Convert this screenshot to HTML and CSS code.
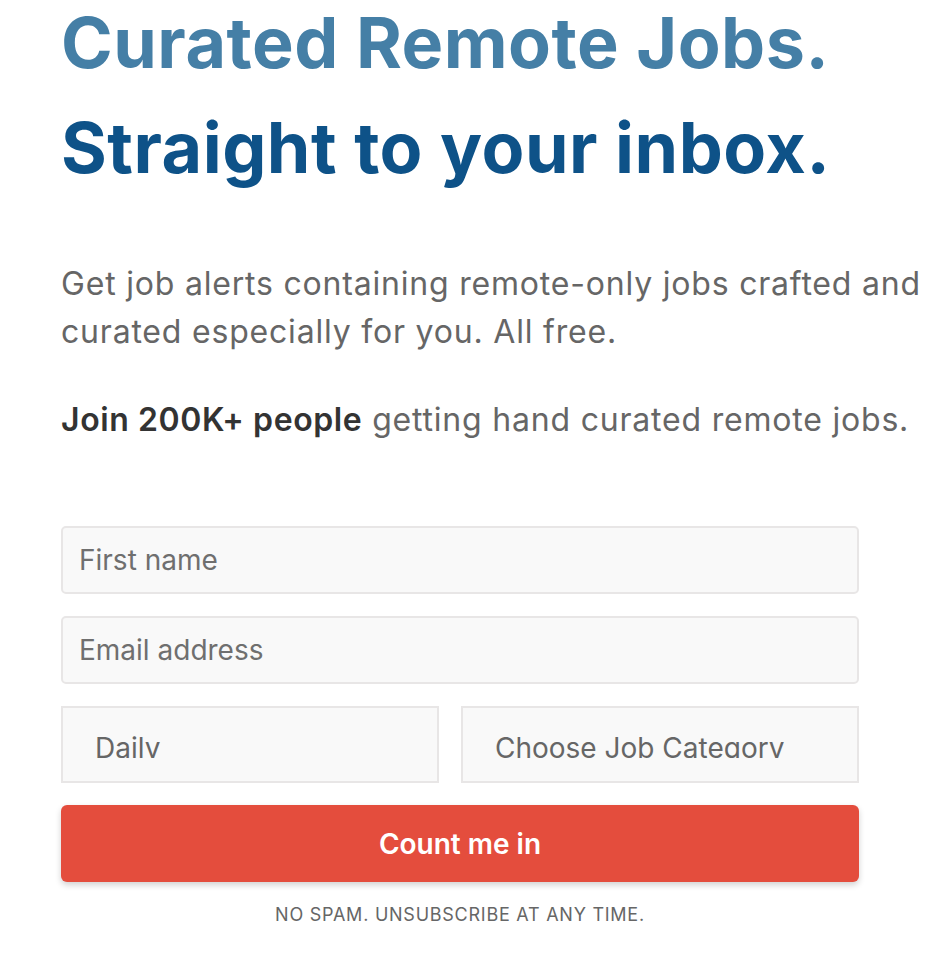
FILE: index.html
```
<!DOCTYPE html>
<html lang="en">
<head>
    <meta charset="UTF-8">
    <meta name="viewport" content="width=device-width, initial-scale=1.0">
    <title>Curated Remote Jobs</title>
    <link rel="stylesheet" href="styles.css">
</head>
<body>

    <!-- Signup hero -->
    <div class="container">
        <h1 class="headline">
            <span class="headline-light">Curated Remote Jobs.</span><br>
            <span class="headline-dark">Straight to your inbox.</span>
        </h1>

        <p class="lead">Get job alerts containing remote-only jobs crafted and curated especially for you. All free.</p>
        <p class="lead"><strong>Join 200K+ people</strong> getting hand curated remote jobs.</p>

        <form class="signup" onsubmit="return false;">
            <input type="text" class="field" placeholder="First name">
            <input type="email" class="field" placeholder="Email address">
            <div class="select-row">
                <select class="choice">
                    <option>Daily</option>
                    <option>Weekly</option>
                </select>
                <select class="choice">
                    <option>Choose Job Category</option>
                    <option>Development</option>
                    <option>Design</option>
                    <option>Marketing</option>
                </select>
            </div>
            <button type="submit" class="submit">Count me in</button>
            <p class="note">No spam. Unsubscribe at any time.</p>
        </form>
    </div>

</body>
</html>
```

FILE: styles.css
```
body {
    font-family: 'Inter', 'Liberation Sans', sans-serif;
    background-color: #fff;
    margin: 0;
    padding: 0 0 0 61px;
    color: #666;
}
.container {
    width: 870px;
}
.headline {
    margin: -10px 0 0;
    font-size: 70px;
    line-height: 105px;
    font-weight: 700;
    letter-spacing: 0.5px;
}
.headline-light {
    color: #457fa6;
}
.headline-dark {
    color: #0e5288;
}
.lead {
    font-size: 32px;
    line-height: 48px;
    letter-spacing: 0.8px;
    margin: 60px 0 0;
    color: #666;
}
.lead + .lead {
    margin-top: 40px;
}
.lead strong {
    color: #333;
    font-weight: 600;
    letter-spacing: 0.6px;
}
.signup {
    width: 798px;
    margin-top: 82px;
    display: flex;
    flex-direction: column;
    gap: 22px;
}
.field {
    height: 68px;
    box-sizing: border-box;
    padding: 0 16px;
    font-family: inherit;
    font-size: 28px;
    color: #333;
    background-color: #f9f9f9;
    border: 2px solid #e8e6e6;
    border-radius: 5px;
    outline: none;
}
.field::placeholder {
    color: #6f6f6f;
}
.select-row {
    display: flex;
    gap: 22px;
}
.choice {
    flex: 1;
    height: 77px;
    box-sizing: border-box;
    padding: 23px 32px 23px;
    font-family: inherit;
    font-size: 28px;
    color: #666;
    background-color: #f9f9f9;
    border: 2px solid #e8e6e6;
    border-radius: 0;
    appearance: none;
    -webkit-appearance: none;
    outline: none;
}
.choice:last-child {
    flex: 0 0 398px;
}
.submit {
    height: 77px;
    background-color: #e44d3d;
    color: white;
    border: none;
    border-radius: 6px;
    font-family: inherit;
    font-size: 28px;
    font-weight: 600;
    cursor: pointer;
    box-shadow: 0 3px 6px rgba(0, 0, 0, 0.18);
}
.submit:hover {
    background-color: #d13f30;
}
.note {
    margin: 0;
    text-align: center;
    font-size: 18px;
    text-transform: uppercase;
    letter-spacing: 0.75px;
    color: #666;
}
```
